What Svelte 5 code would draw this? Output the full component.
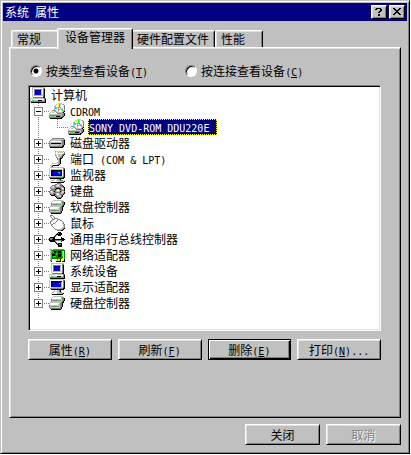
<script>
	// Palette for the 16x16 icons, one letter per pixel
	const palette = {
		k: '#000000',
		g: '#808080',
		l: '#c0c0c0',
		w: '#ffffff',
		b: '#0000ff',
		n: '#000080',
		c: '#00d0d0',
		y: '#ffff00',
		v: '#00ff00',
		d: '#008000',
		o: '#c0b060'
	};

	const icons = {
		computer: [
			'..lllllllllllll.',
			'..lwwwwwwwwwwgg.',
			'..lwggggggggwgk.',
			'..lwgnnnnnnlwgk.',
			'..lwgnbbbbblwgk.',
			'..lwgnbbbbblwgk.',
			'..lwgnbbbbblwgk.',
			'..lwgnbbbbblwgk.',
			'..lwgllllllllgk.',
			'..lwwwwwwwwwwgk.',
			'...ggggggggggkk.',
			'llllllllllllllgg',
			'lwwwwwwwwwwwwwgk',
			'lwvvllllkkkkllgk',
			'lggggggggggggggk',
			'.kkkkkkkkkkkkkkk'
		],
		cdrom: [
			'.........llll...',
			'.......lyyvlwlg.',
			'......lwyyvlwwwg',
			'.....llwwyvwwwlg',
			'.....lcllglgwwwg',
			'.....lccwlwlllwg',
			'.....lwwwgllvvwg',
			'...ggglwwlwwwvlg',
			'..lwwlglwlwwwwgk',
			'.lwllwwglllllgk.',
			'lwwwwwwwggggglgk',
			'lllllllllllllggk',
			'gggggggggggglggk',
			'gllvvllkkkkglgk.',
			'ggggggggggggkk..',
			'.kkkkkkkkkkkk...'
		],
		disk: [
			'................',
			'................',
			'................',
			'...gggggggggggg.',
			'..glllllllllllgg',
			'.gllllllllllgggk',
			'gwwwwwwwwwwwlggk',
			'gllllllllllllggk',
			'glkkkkkkkkkklggk',
			'gllllllllllllggk',
			'glllllllllvvlgk.',
			'gggggggggggggkk.',
			'.kkkkkkkkkkkkk..',
			'................',
			'................',
			'................'
		],
		port: [
			'......oyoyoyoyoy',
			'......lwyoyoyowg',
			'......lwwwwwwwlg',
			'......lwlllllggk',
			'......glwllllgk.',
			'.......lwlllgk..',
			'.......glwlggk..',
			'........glgkk...',
			'........glgk....',
			'.........lgk....',
			'.........lgk....',
			'........llgk....',
			'...lllllwlgk....',
			'..lwwwwwlgk.....',
			'.lwgkkkkkk......',
			'..gk............'
		],
		monitor: [
			'.llllllllllllll.',
			'lwwwwwwwwwwwwwgg',
			'lwllllllllllllgk',
			'lwkkkkkkkkkkkwgk',
			'lwknnnbbbbbbkwgk',
			'lwknbbbbbccbkwgk',
			'lwknbbbbbbcbkwgk',
			'lwknbbbbbbbbkwgk',
			'lwkkkkkkkkkkkwgk',
			'lwlllllllllvllgk',
			'ggggggggggggggkk',
			'.kkkkkkkkkkkkkk.',
			'.....lwwllgk....',
			'..lllwwllllggg..',
			'.lwwwwwwwlllllgk',
			'..kkkkkkkkkkkkk.'
		],
		keyboard: [
			'........gggg....',
			'......gglllgg...',
			'...gggglwwlggk..',
			'..glwggllllgggk.',
			'.gllllggggggllgk',
			'.ggllggkkkkglwlk',
			'..ggggkglwgkgllk',
			'.gggggglwwlggggk',
			'glwlgkgllllkgwlg',
			'gllllggggggglllk',
			'.gllggglwlggllgk',
			'.kgggkglwwlgggk.',
			'..kkkkggllllgk..',
			'......kgglllgk..',
			'.......kggggk...',
			'........kkkk....'
		],
		floppy: [
			'................',
			'....llllllllll..',
			'...lwwwwwwwwlgg.',
			'..lwwwwwwwwwlggk',
			'..gllllllllllggk',
			'..glgggggvvglggk',
			'..gllllllllllgk.',
			'.lllllllllllgkk.',
			'lwwwwwwwwwlggk..',
			'lwwwwwwwwllggk..',
			'gllllllllllggk..',
			'glgggggvvglggk..',
			'gllllllllllgk...',
			'.gggggggggggk...',
			'..kkkkkkkkkk....',
			'................'
		],
		mouse: [
			'.ggg............',
			'.g..g...........',
			'..g..g..........',
			'...g.gggg.......',
			'...gglwwlgg.....',
			'..glwwwwgwwgg...',
			'.glwwwwgwwwwwg..',
			'.gwwwwgwwwwwwwg.',
			'.gwwggwwwwwwwlg.',
			'..ggwwwwwwwwwwlg',
			'..gwwwwwwwwwwwlg',
			'...gwwwwwwwwwwlg',
			'....gwwwwwwwwllg',
			'.....gwwwwwwllgk',
			'......gglllllgk.',
			'........ggggkk..'
		],
		usb: [
			'................',
			'.........kkk....',
			'........kgkkk...',
			'.......kkkkkk...',
			'......kg.kkk....',
			'.....kg.........',
			'.kkkkk......k...',
			'kgggkk......kkk.',
			'kggkkkkkkkkkkkkk',
			'kkkkkkgggggggkk.',
			'.kkkkkg.....k...',
			'......kg........',
			'.......kgkkkk...',
			'........kkggk...',
			'.........kkkk...',
			'.........kkkk...'
		],
		network: [
			'................',
			'................',
			'llg.ggggggggggg.',
			'.lgddddddddddddd',
			'.lgvdkkddkkkdlwd',
			'.lgdvkkddkkkdvwd',
			'.lgddddvdddddlwd',
			'.lgkkkdvdkkkdvwd',
			'.lgkkkdddkkkdlwd',
			'.lgdvvvddkkkdvwd',
			'.lgdddddddddddyd',
			'.lgddddddddddyyd',
			'.lg...yyvyyk.yyk',
			'.gg...yyvyyk.yyk',
			'..k....kkkkk.kkk',
			'................'
		],
		screen: [
			'.llllllllllllll.',
			'lwwwwwwwwwwwwwgg',
			'lwkkkkkkkkkkkwgk',
			'lwknnnnnnnnnlwgk',
			'lwknbbbbbbcblwgk',
			'lwknbbbbbbbblwgk',
			'lwknbbbbbbbblwgk',
			'lwknbbbbbbbblwgk',
			'lwllllllllllllgk',
			'.gggggggggggggkk',
			'..kkkkkkkkkkkkk.',
			'.....lwwllgk....',
			'.....lwwllgk....',
			'...llwwwlllgg...',
			'..lwwwwwlllllgk.',
			'...kkkkkkkkkkk..'
		]
	};

	// Groups runs of the same colour in a row into one rectangle
	function getRuns(rows) {
		const runs = [];
		rows.forEach((row, y) => {
			let x = 0;
			while (x < row.length) {
				let end = x + 1;
				while (end < row.length && row[end] === row[x]) end++;
				if (row[x] !== '.') {
					runs.push({ x, y, width: end - x, fill: palette[row[x]] });
				}
				x = end;
			}
		});
		return runs;
	}

	// Latin text is half as wide as a Chinese character
	function split(text) {
		return text.match(/[ -~]+|[^ -~]+/g).map((part) => ({
			part,
			latin: /^[ -~]/.test(part)
		}));
	}

	const tabs = ['常规', '设备管理器', '硬件配置文件', '性能'];

	const views = [
		{ value: 'type', label: '按类型查看设备', key: 'T' },
		{ value: 'connection', label: '按连接查看设备', key: 'C' }
	];

	const actions = [
		{ label: '属性', key: 'R' },
		{ label: '刷新', key: 'F' },
		{ label: '删除', key: 'E', isDefault: true },
		{ label: '打印', key: 'N', more: '...' }
	];

	const devices = [
		{ name: 'CDROM', icon: 'cdrom', children: ['SONY DVD-ROM DDU220E'] },
		{ name: '磁盘驱动器', icon: 'disk' },
		{ name: '端口 (COM & LPT)', icon: 'port' },
		{ name: '监视器', icon: 'monitor' },
		{ name: '键盘', icon: 'keyboard' },
		{ name: '软盘控制器', icon: 'floppy' },
		{ name: '鼠标', icon: 'mouse' },
		{ name: '通用串行总线控制器', icon: 'usb' },
		{ name: '网络适配器', icon: 'network' },
		{ name: '系统设备', icon: 'computer' },
		{ name: '显示适配器', icon: 'screen' },
		{ name: '硬盘控制器', icon: 'floppy' }
	];

	let activeTab = $state(1);
	let view = $state('type');
	let selected = $state('SONY DVD-ROM DDU220E');
	let open = $state({ CDROM: true });
</script>

{#snippet icon(name)}
	<svg class="icon" viewBox="0 0 16 16" shape-rendering="crispEdges" aria-hidden="true">
		{#each getRuns(icons[name]) as run}
			<rect x={run.x} y={run.y} width={run.width} height="1" fill={run.fill} />
		{/each}
	</svg>
{/snippet}

{#snippet mixed(text)}
	{#each split(text) as { part, latin }}<span class:latin>{part}</span>{/each}
{/snippet}

{#snippet mnemonic(label, key, more = '')}
	<span>{label}<span class="latin">(<u>{key}</u>){more}</span></span>
{/snippet}

<div class="window">
	<header class="title-bar">
		<h1>{@render mixed('系统 属性')}</h1>
		<button class="caption" aria-label="帮助">
			<svg viewBox="0 0 12 10" shape-rendering="crispEdges">
				<path d="M3 1h5v1H3zM2 2h2v1H2zM7 2h2v2H7zM6 4h2v1H6zM5 5h2v1H5zM5 7h2v2H5z" />
			</svg>
		</button>
		<button class="caption" aria-label="关闭窗口">
			<svg viewBox="0 0 12 10" shape-rendering="crispEdges">
				<path
					d="M2 1h2v1H2zM8 1h2v1H8zM3 2h2v1H3zM7 2h2v1H7zM4 3h4v1H4zM5 4h2v1H5zM4 5h4v1H4zM3 6h2v1H3zM7 6h2v1H7zM2 7h2v1H2zM8 7h2v1H8z"
				/>
			</svg>
		</button>
	</header>

	<main>
		<div class="tabs" role="tablist">
			{#each tabs as tab, i}
				<button
					class="tab"
					class:active={activeTab === i}
					role="tab"
					aria-selected={activeTab === i}
					onclick={() => (activeTab = i)}>{tab}</button
				>
			{/each}
		</div>

		<section class="panel">
			<div class="views">
				{#each views as item}
					<label>
						<input type="radio" name="view" value={item.value} bind:group={view} />
						{@render mnemonic(item.label, item.key)}
					</label>
				{/each}
			</div>

			<ul class="tree">
				<li class="row">
					{@render icon('computer')}
					<span class="name">计算机</span>
				</li>
				{#each devices as device, i}
					<li class="row">
						<span class="gutter branch" class:last={i === devices.length - 1}>
							<button
								class="toggle"
								class:open={open[device.name]}
								aria-label={device.name}
								onclick={() => (open[device.name] = !open[device.name])}
							></button>
						</span>
						{@render icon(device.icon)}
						<span class="name">{@render mixed(device.name)}</span>
					</li>
					{#if open[device.name]}
						{#each device.children ?? [] as child}
							<li class="row">
								<span class="gutter line"></span>
								<span class="gutter branch last"></span>
								{@render icon(device.icon)}
								<span class="name" class:selected={selected === child}
									>{@render mixed(child)}</span
								>
							</li>
						{/each}
					{/if}
				{/each}
			</ul>

			<div class="actions">
				{#each actions as action}
					<button class="button" class:default={action.isDefault}>
						{@render mnemonic(action.label, action.key, action.more)}
					</button>
				{/each}
			</div>
		</section>

		<footer>
			<button class="button">关闭</button>
			<button class="button" disabled>取消</button>
		</footer>
	</main>
</div>

<style>
	:global(body) {
		background: #fff;
	}
	.window {
		margin: 0 1px 1px 0;
		padding: 1px;
		background: #c0c0c0;
		border: 1px solid;
		border-color: #c0c0c0 #000 #000 #c0c0c0;
		box-shadow:
			inset 1px 1px #fff,
			inset -1px -1px #808080;
		color: #000;
		font-family: 'Noto Sans CJK SC', sans-serif;
		font-size: 12px;
		line-height: 16px;
		white-space: nowrap;
	}
	button {
		margin: 0;
		padding: 0;
		border-radius: 0;
		background: #c0c0c0;
		color: #000;
		font: inherit;
	}
	.latin {
		font-family: 'DejaVu Sans Mono', monospace;
		font-size: 10px;
		line-height: 10px;
		white-space: pre;
	}
	u {
		text-underline-offset: 1px;
	}

	.title-bar {
		display: flex;
		align-items: center;
		gap: 2px;
		height: 18px;
		margin: 1px;
		padding: 0 2px;
		background: #000080;
	}
	h1 {
		flex: 1;
		margin: 0;
		color: #fff;
		font-size: 12px;
		font-weight: 400;
	}
	.caption,
	.button {
		border: 1px solid;
		border-color: #fff #000 #000 #fff;
		box-shadow:
			inset 1px 1px #dfdfdf,
			inset -1px -1px #808080;
	}
	.caption {
		width: 16px;
		height: 14px;
	}
	.caption svg {
		display: block;
		width: 12px;
		height: 10px;
		margin: 0 auto;
	}

	main {
		padding: 6px 7px 7px;
	}
	.tabs {
		display: flex;
		align-items: flex-end;
		height: 19px;
		padding-left: 2px;
	}
	.tab {
		min-width: 48px;
		padding: 0 5px;
		border: 1px solid;
		border-color: #fff #000 #fff #fff;
		border-bottom: 0;
		border-radius: 2px 2px 0 0;
		box-shadow:
			inset 1px 1px #dfdfdf,
			inset -1px 0 #808080;
		text-align: left;
	}
	.tab.active {
		position: relative;
		margin: 0 -2px -2px;
		padding: 0 7px 4px;
	}
	.panel {
		padding: 15px 19px 57px 18px;
		border: 1px solid;
		border-color: #fff #000 #000 #fff;
		box-shadow:
			inset 1px 1px #dfdfdf,
			inset -1px -1px #808080;
	}

	.views {
		display: flex;
		gap: 37px;
		height: 16px;
		margin-left: 2px;
	}
	.views label {
		display: flex;
		align-items: center;
		gap: 4px;
	}
	input {
		appearance: none;
		width: 12px;
		height: 12px;
		margin: 0;
		border: 1px solid;
		border-color: #808080 #fff #fff #808080;
		border-radius: 50%;
		background: #fff;
		box-shadow: inset 1px 1px #000;
	}
	input:checked {
		background: radial-gradient(circle, #000 2px, #fff 3px);
	}

	.tree {
		margin: 6px 0 8px;
		padding: 1px 1px 19px;
		border: 1px solid;
		border-color: #808080 #fff #fff #808080;
		background: #fff;
		box-shadow:
			inset 1px 1px #000,
			inset -1px -1px #dfdfdf;
		list-style: none;
	}
	.row {
		display: flex;
		height: 16px;
	}
	.icon {
		flex: none;
		width: 16px;
		height: 16px;
		margin-right: 4px;
	}
	.name {
		padding-right: 7px;
		border: 1px solid transparent;
		line-height: 14px;
	}
	.name.selected {
		border: 1px dotted #ff0;
		background: #000080;
		color: #fff;
	}
	.gutter {
		flex: none;
		width: 19px;
		height: 16px;
		background-repeat: no-repeat;
	}
	.line,
	.branch {
		--down: repeating-linear-gradient(#808080 0 1px, transparent 1px 2px);
		--across: repeating-linear-gradient(90deg, #808080 0 1px, transparent 1px 2px);
	}
	.line {
		background-image: var(--down);
		background-position: 8px 0;
		background-size: 1px 16px;
	}
	.branch {
		background-image: var(--down), var(--across);
		background-position:
			8px 0,
			8px 8px;
		background-size:
			1px 16px,
			11px 1px;
	}
	.branch.last {
		background-size:
			1px 8px,
			11px 1px;
	}
	.toggle {
		display: block;
		width: 9px;
		height: 9px;
		margin: 4px;
		border: 1px solid #808080;
		background:
			linear-gradient(#000, #000) center / 5px 1px no-repeat,
			linear-gradient(#000, #000) center / 1px 5px no-repeat,
			#fff;
	}
	.toggle.open {
		background: linear-gradient(#000, #000) center / 5px 1px no-repeat #fff;
	}

	.actions {
		display: grid;
		grid-template-columns: repeat(4, 1fr);
		gap: 6px;
	}
	.button {
		height: 21px;
		line-height: 17px;
	}
	.button.default {
		border-color: #000;
		box-shadow:
			inset 1px 1px #fff,
			inset -1px -1px #000,
			inset -2px -2px #808080;
	}
	.button:disabled {
		color: #808080;
		text-shadow: 1px 1px #fff;
	}
	footer {
		display: flex;
		justify-content: flex-end;
		gap: 6px;
		margin-top: 6px;
	}
	footer .button {
		width: 75px;
	}
</style>
